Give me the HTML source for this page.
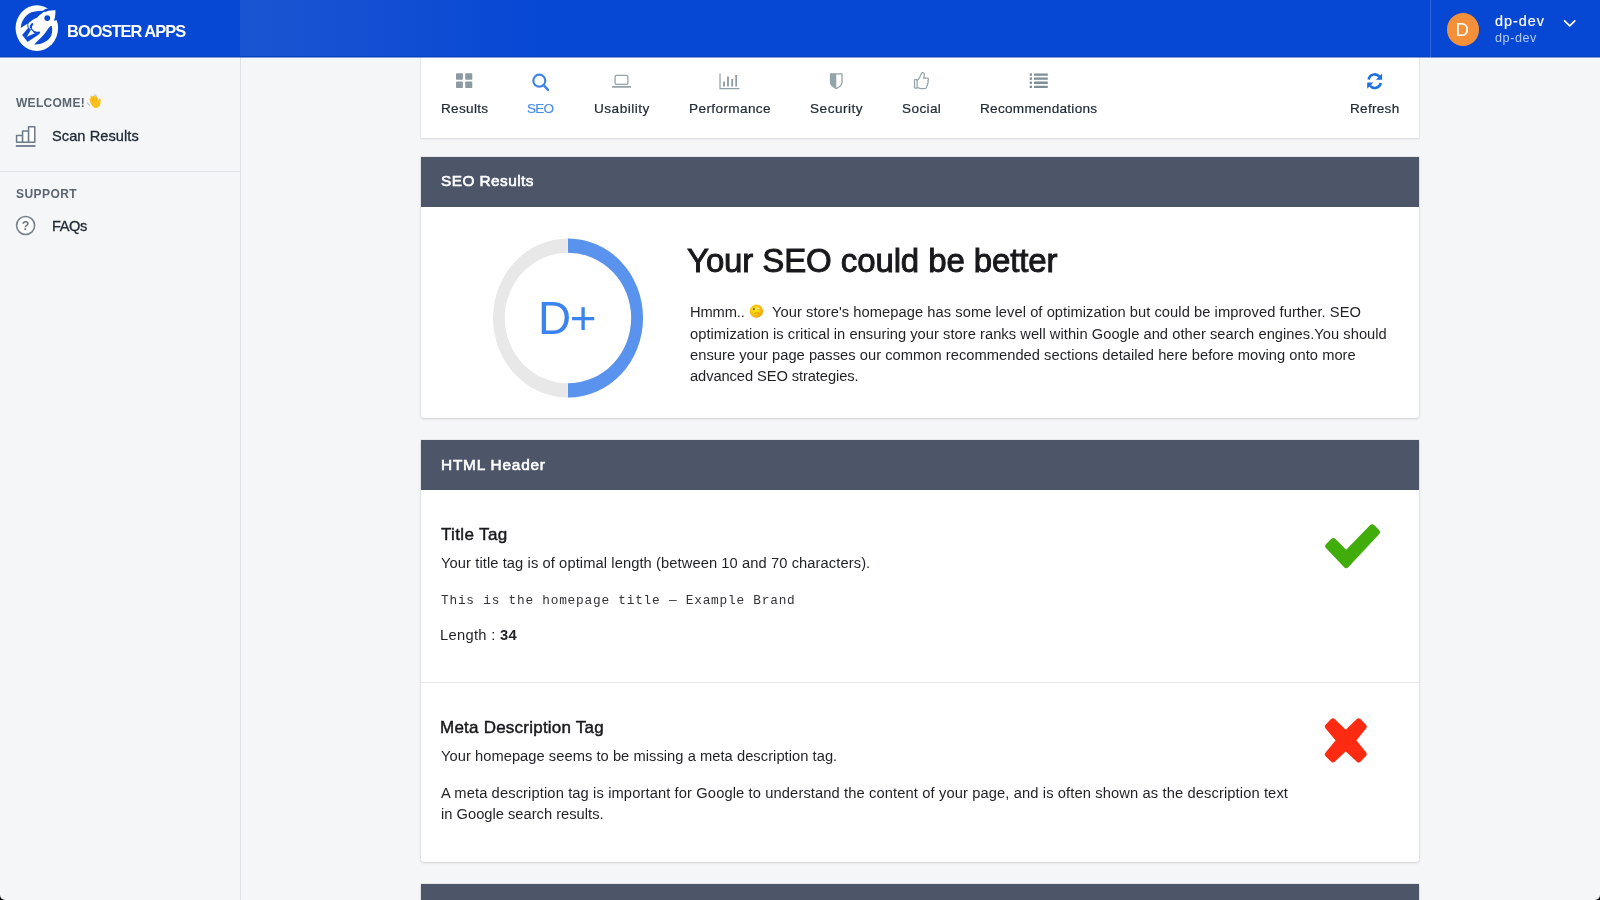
<!DOCTYPE html>
<html lang="en">
<head>
<meta charset="utf-8">
<title>Booster Apps - SEO Results</title>
<style>
*{box-sizing:border-box;margin:0;padding:0}
html,body{width:1600px;height:900px;overflow:hidden}
body{position:relative;background:#f4f6f8;font-family:"Liberation Sans",Arial,sans-serif;color:#212b36;-webkit-font-smoothing:antialiased}
.abs{position:absolute;white-space:nowrap;z-index:4}
div.abs{will-change:transform}
#topbar{position:absolute;left:0;top:0;width:1600px;height:57px;background:#0647d4;z-index:3}
#topbar .grad{position:absolute;left:240px;top:0;width:300px;height:57px;background:linear-gradient(90deg,#1a55d1 0%,#0f4dd2 60%,#0647d4 100%)}
#topbar .shade{position:absolute;left:0;top:56px;width:1600px;height:1px;background:#0540c0}
#topbar .shade2{position:absolute;left:0;top:57px;width:1600px;height:1px;background:rgba(6,66,200,.5)}
#topbar .vsep{position:absolute;left:1430px;top:0;width:1px;height:57px;background:#2f66dc}
#avatar{position:absolute;left:1446.5px;top:12.8px;width:32.6px;height:33.2px;border-radius:50%;background:#f4903a}
#sidebar{position:absolute;left:0;top:57px;width:241px;height:843px;background:#f4f6f8;border-right:1px solid #dfe3e8}
#sdiv{position:absolute;left:0;top:171px;width:240px;height:1px;background:#dfe3e8}
#tabs{position:absolute;left:421px;top:57px;width:998px;height:81px;background:#fff;box-shadow:0 0 0 1px rgba(63,63,68,.04),0 1px 2px rgba(63,63,68,.10)}
.card{position:absolute;left:421px;width:998px;background:#fff;border-radius:0 0 3px 3px;box-shadow:0 0 0 1px rgba(63,63,68,.05),0 1px 3px rgba(63,63,68,.15)}
.chead{position:absolute;left:0;top:0;width:998px;height:50px;background:#4d5568}
.hr{position:absolute;left:0;width:998px;height:1px;background:#e4e7ec}
.corner{position:absolute;bottom:0;width:5px;height:5px;background:#000}
.corner i{position:absolute;width:10px;height:10px;border-radius:50%;background:#f4f6f8;bottom:0}
</style>
</head>
<body>
<div id="topbar">
  <div class="grad"></div>
  <div class="shade"></div>
  <div class="shade2"></div>
  <div class="vsep"></div>
  <svg class="abs" style="left:12px;top:2px" width="50" height="50" viewBox="0 0 900 900">
    <ellipse cx="447" cy="470" rx="383" ry="410" fill="#fff"/>
    <path d="M158 468 C160 370 225 240 350 186 C430 158 520 160 610 158 C560 185 500 232 450 282 C390 302 330 348 290 388 C240 412 200 442 158 468 Z" fill="#0a49d2"/>
    <path d="M400 765 C470 690 560 610 610 540 C640 490 680 445 715 420 C735 520 720 600 680 650 C610 730 500 775 400 765 Z" fill="#0a49d2"/>
    <path d="M560 150 C640 95 740 100 830 120 L830 330 L700 300 Z" fill="#0a49d2"/>
    <path d="M560 200 C640 150 720 145 785 150 C790 250 765 340 710 430 L560 400 Z" fill="#fff"/>
    <path d="M786 150 C792 240 776 300 756 338 L900 310 L900 100 L800 110 Z" fill="#0647d4"/>
    <circle cx="635" cy="290" r="52" fill="#0a49d2"/>
    <path d="M296 462 L186 594 L282 714 L490 576 L476 548 L396 572 L262 630 L340 500 Z" fill="#0a49d2" stroke="#0a49d2" stroke-width="6" stroke-linejoin="round"/>
    <path d="M288 380 C280 420 282 450 300 480" fill="none" stroke="#0a49d2" stroke-width="18" stroke-linecap="round"/>
    <path d="M364 398 C350 415 340 432 338 452" fill="none" stroke="#0a49d2" stroke-width="40" stroke-linecap="round"/>
    <path d="M338 452 C342 490 372 520 408 544" fill="none" stroke="#0a49d2" stroke-width="20" stroke-linecap="round"/>
    <path d="M408 544 C432 556 456 556 488 548" fill="none" stroke="#0a49d2" stroke-width="36" stroke-linecap="round"/>
  </svg>

  <div id="avatar"></div>
  <div class="abs" style="left:1445.6px;top:12.6px;width:32.6px;height:33.2px;line-height:33.2px;text-align:center;font-size:18.6px;color:#fff">D</div>
</div>
<div id="sidebar"></div>
<div id="sdiv"></div>
<div id="tabs"></div>
<div class="card" style="top:157px;height:261px"><div class="chead"></div></div>
<div class="card" style="top:440px;height:422px"><div class="chead"></div><div class="hr" style="top:242px"></div></div>
<div class="card" style="top:884px;height:60px"><div class="chead"></div></div>
<div class="corner" style="left:0"><i style="left:0"></i></div>
<div class="corner" style="right:0"><i style="right:0"></i></div>
<div class="abs" id="brand" style="left:66.50px;top:20.52px;font-size:16.4px;line-height:21px;letter-spacing:-0.958px;font-weight:bold;color:#fff">BOOSTER APPS</div>
<div class="abs" id="uname" style="left:1494.50px;top:11.61px;font-size:14.4px;line-height:19px;letter-spacing:0.977px;color:#fff;-webkit-text-stroke:.2px #fff">dp-dev</div>
<div class="abs" id="usub" style="left:1494.50px;top:30.33px;font-size:12.6px;line-height:16px;letter-spacing:0.577px;color:#b5caf6">dp-dev</div>
<div class="abs" id="welcome" style="left:15.70px;top:95.14px;font-size:12px;line-height:16px;letter-spacing:0.292px;font-weight:bold;color:#5c6670">WELCOME!</div>
<div class="abs" id="scan" style="left:51.80px;top:127.34px;font-size:14.6px;line-height:19px;letter-spacing:0.074px;color:#212b36;-webkit-text-stroke:.3px #212b36">Scan Results</div>
<div class="abs" id="support" style="left:15.70px;top:185.64px;font-size:12px;line-height:16px;letter-spacing:0.431px;font-weight:bold;color:#5c6670">SUPPORT</div>
<div class="abs" id="faqs" style="left:51.80px;top:217.14px;font-size:14.6px;line-height:19px;letter-spacing:-0.367px;color:#212b36;-webkit-text-stroke:.3px #212b36">FAQs</div>
<div class="abs" id="t1" style="left:440.50px;top:99.89px;font-size:13.6px;line-height:18px;letter-spacing:0.295px;color:#212b36;-webkit-text-stroke:.2px #212b36">Results</div>
<div class="abs" id="t2" style="left:526.80px;top:99.89px;font-size:13.6px;line-height:18px;letter-spacing:-0.859px;color:#4a8de6;-webkit-text-stroke:.15px #4a8de6">SEO</div>
<div class="abs" id="t3" style="left:593.50px;top:99.89px;font-size:13.6px;line-height:18px;letter-spacing:0.491px;color:#212b36;-webkit-text-stroke:.2px #212b36">Usability</div>
<div class="abs" id="t4" style="left:688.50px;top:99.89px;font-size:13.6px;line-height:18px;letter-spacing:0.377px;color:#212b36;-webkit-text-stroke:.2px #212b36">Performance</div>
<div class="abs" id="t5" style="left:809.70px;top:99.89px;font-size:13.6px;line-height:18px;letter-spacing:0.499px;color:#212b36;-webkit-text-stroke:.2px #212b36">Security</div>
<div class="abs" id="t6" style="left:901.70px;top:99.89px;font-size:13.6px;line-height:18px;letter-spacing:0.374px;color:#212b36;-webkit-text-stroke:.2px #212b36">Social</div>
<div class="abs" id="t7" style="left:980.00px;top:99.89px;font-size:13.6px;line-height:18px;letter-spacing:0.268px;color:#212b36;-webkit-text-stroke:.2px #212b36">Recommendations</div>
<div class="abs" id="t8" style="left:1349.80px;top:99.89px;font-size:13.6px;line-height:18px;letter-spacing:0.265px;color:#212b36;-webkit-text-stroke:.2px #212b36">Refresh</div>
<div class="abs" id="h1" style="left:441.20px;top:171.46px;font-size:15.4px;line-height:20px;letter-spacing:0.439px;color:#fff;-webkit-text-stroke:.62px #fff">SEO Results</div>
<div class="abs" id="grade" style="left:538.20px;top:288.53px;font-size:45.8px;line-height:60px;letter-spacing:-1.428px;color:#3b83ee">D+</div>
<div class="abs" id="big" style="left:686.60px;top:238.87px;font-size:33px;line-height:43px;letter-spacing:-0.106px;color:#17191c;-webkit-text-stroke:.95px #17191c">Your SEO could be better</div>
<div class="abs" id="p1a" style="left:690.00px;top:302.81px;font-size:14.7px;line-height:19px;letter-spacing:-0.117px;color:#1e2126">Hmmm..</div>
<div class="abs" id="p1b" style="left:771.70px;top:302.81px;font-size:14.7px;line-height:19px;letter-spacing:0.053px;color:#1e2126">Your store's homepage has some level of optimization but could be improved further. SEO</div>
<div class="abs" id="p2" style="left:690.00px;top:324.51px;font-size:14.7px;line-height:19px;letter-spacing:0.039px;color:#1e2126">optimization is critical in ensuring your store ranks well within Google and other search engines.You should</div>
<div class="abs" id="p3" style="left:690.00px;top:345.51px;font-size:14.7px;line-height:19px;letter-spacing:0.030px;color:#1e2126">ensure your page passes our common recommended sections detailed here before moving onto more</div>
<div class="abs" id="p4" style="left:690.00px;top:366.71px;font-size:14.7px;line-height:19px;letter-spacing:-0.089px;color:#1e2126">advanced SEO strategies.</div>
<div class="abs" id="h2" style="left:440.80px;top:454.86px;font-size:15.4px;line-height:20px;letter-spacing:0.791px;color:#fff;-webkit-text-stroke:.62px #fff">HTML Header</div>
<div class="abs" id="tt" style="left:441.10px;top:524.11px;font-size:17px;line-height:22px;letter-spacing:0.361px;color:#17191c;-webkit-text-stroke:.45px #17191c">Title Tag</div>
<div class="abs" id="tt1" style="left:441.10px;top:554.11px;font-size:14.7px;line-height:19px;letter-spacing:0.091px;color:#1e2126">Your title tag is of optimal length (between 10 and 70 characters).</div>
<div class="abs" id="tt2" style="left:441.10px;top:591.69px;font-size:12.8px;line-height:17px;letter-spacing:0.762px;font-family:'Liberation Mono','Courier New',monospace;color:#30343a">This is the homepage title — Example Brand</div>
<div class="abs" id="tt3" style="left:440.30px;top:626.11px;font-size:14.7px;line-height:19px;letter-spacing:0.318px;color:#1e2126">Length : <b>34</b></div>
<div class="abs" id="md" style="left:440.30px;top:717.01px;font-size:17px;line-height:22px;letter-spacing:0.228px;color:#17191c;-webkit-text-stroke:.45px #17191c">Meta Description Tag</div>
<div class="abs" id="md1" style="left:441.10px;top:746.61px;font-size:14.7px;line-height:19px;letter-spacing:0.043px;color:#1e2126">Your homepage seems to be missing a meta description tag.</div>
<div class="abs" id="md2" style="left:441.10px;top:783.71px;font-size:14.7px;line-height:19px;letter-spacing:0.117px;color:#1e2126">A meta description tag is important for Google to understand the content of your page, and is often shown as the description text</div>
<div class="abs" id="md3" style="left:440.60px;top:804.71px;font-size:14.7px;line-height:19px;letter-spacing:0.005px;color:#1e2126">in Google search results.</div>
<!-- icons overlay (page coordinates) -->
<svg class="abs" style="left:0;top:0;z-index:5" width="1600" height="900" viewBox="0 0 1600 900">
  <!-- chevron -->
  <path d="M1564.6 20.8 L1569.7 25.9 L1574.8 20.8" fill="none" stroke="#fff" stroke-width="1.7" stroke-linecap="round" stroke-linejoin="round"/>
  <!-- sidebar: analytics -->
  <g fill="#fff" stroke="#6d7a87" stroke-width="1.5" stroke-linejoin="round">
    <rect x="16.6" y="135.4" width="6" height="6.8"/>
    <rect x="22.6" y="131" width="6" height="11.2"/>
    <rect x="28.6" y="126.7" width="6.2" height="15.5"/>
  </g>
  <rect x="15.8" y="144.9" width="19.8" height="2" rx=".6" fill="#7b8794"/>
  <!-- sidebar: faq -->
  <circle cx="25.6" cy="225.5" r="9" fill="#fff" stroke="#76828f" stroke-width="1.6"/>
  <text x="25.6" y="230.4" text-anchor="middle" font-family="Liberation Sans, sans-serif" font-weight="bold" font-size="12.5" fill="#6b7682">?</text>
  <!-- wave emoji -->
  <g>
    <title>👋 waving hand</title>
    <path d="M89.6 100.2 C88.9 98.6 90.3 97.6 91.2 98.6 L90.6 97.4 C90 95.9 91.8 95.2 92.6 96.4 L92.9 96.9 C92.6 95.4 94.4 95 95 96.2 L95.6 97.4 C95.6 96.2 97.2 96 97.6 97.2 L98.8 100.8 C98.8 99.4 99.2 98.3 100.2 98.4 C100.8 98.5 100.7 99.4 100.6 100.2 C100.6 102.4 100.6 104.4 99.6 105.8 C98.4 107.8 96 108.6 94 107.6 C92 106.6 90.6 103 89.6 100.2 Z" fill="#fcc21b"/>
    <path d="M91.4 98.8 L93.4 103 M92.9 97 L95.2 102.2 M95.5 97.6 L97 101.4" stroke="#e8a50c" stroke-width=".6" fill="none"/>
    <path d="M94.6 94.6 C95.4 94.8 96.2 95.6 96.4 96.4 M87.4 103 C87.8 104 88.6 104.8 89.6 105.2" stroke="#9aa9c9" stroke-width=".9" stroke-linecap="round" fill="none"/>
  </g>
  <!-- tab: results (grid) -->
  <g fill="#8c9ba2">
    <rect x="456" y="73.2" width="6.9" height="6.5" rx=".8"/>
    <rect x="465.2" y="73.2" width="7.1" height="6.5" rx=".8"/>
    <rect x="456" y="81.6" width="6.9" height="6.4" rx=".8"/>
    <rect x="465.2" y="81.6" width="7.1" height="6.4" rx=".8"/>
  </g>
  <!-- tab: seo (search) -->
  <circle cx="539.3" cy="80.7" r="6" fill="none" stroke="#3f84e8" stroke-width="2.2"/>
  <path d="M543.6 85.2 L548 89.8" stroke="#3f84e8" stroke-width="2.4" stroke-linecap="round" fill="none"/>
  <!-- tab: usability (laptop) -->
  <rect x="615.1" y="75.4" width="12.8" height="9" rx="1.4" fill="none" stroke="#95a3aa" stroke-width="1.3"/>
  <rect x="612" y="86" width="19" height="1.7" rx=".5" fill="#95a3aa"/>
  <!-- tab: performance (bar chart) -->
  <path d="M720 73.5 V88.7 H739.5" fill="none" stroke="#93a1a8" stroke-width="1.25"/>
  <g fill="#8c9ba2">
    <rect x="723.1" y="81.5" width="1.8" height="5"/>
    <rect x="727.1" y="76.5" width="1.8" height="10"/>
    <rect x="731.3" y="79" width="1.8" height="7.5"/>
    <rect x="735.3" y="75" width="1.8" height="11.5"/>
  </g>
  <!-- tab: security (shield) -->
  <path d="M830.5 73.8 H842 V82 C842 85 839.5 87 836.25 88.6 C833 87 830.5 85 830.5 82 Z" fill="#fff" stroke="#95a3aa" stroke-width="1.3" stroke-linejoin="round"/>
  <path d="M830.5 73.8 H836.25 V88.6 C833 87 830.5 85 830.5 82 Z" fill="#95a3aa"/>
  <!-- tab: social (thumbs up) -->
  <g fill="none" stroke="#95a3aa" stroke-width="1.25" stroke-linejoin="round" stroke-linecap="round">
    <rect x="914.5" y="79.6" width="2.6" height="8.4" rx=".4"/>
    <path d="M917.4 80.2 C919.6 78.4 920.6 76 921.4 73.6 C921.8 72.2 924.2 72.2 924.4 74.2 C924.5 75.6 924 77 923.4 78.2 H927 C928.6 78.2 929 80 927.8 80.8 C928.6 81.6 928.4 83 927.4 83.4 C928 84.4 927.6 85.6 926.6 86 C926.9 87.4 926 88.6 924.6 88.6 H921 C919.6 88.6 918.6 88 917.4 87.6"/>
  </g>
  <!-- tab: recommendations (list) -->
  <g fill="#7f8e96">
    <rect x="1029.7" y="73.4" width="2.3" height="2.3"/><rect x="1034" y="73.4" width="13.8" height="2.3" rx=".5"/>
    <rect x="1029.7" y="77.5" width="2.3" height="2.3"/><rect x="1034" y="77.5" width="13.8" height="2.3" rx=".5"/>
    <rect x="1029.7" y="81.6" width="2.3" height="2.3"/><rect x="1034" y="81.6" width="13.8" height="2.3" rx=".5"/>
    <rect x="1029.7" y="85.7" width="2.3" height="2.3"/><rect x="1034" y="85.7" width="13.8" height="2.3" rx=".5"/>
  </g>
  <!-- tab: refresh -->
  <g fill="none" stroke="#1b6fe0" stroke-width="2.5">
    <path d="M1368.6 79.4 A6.2 6.2 0 0 1 1379.4 76.6"/>
    <path d="M1380.8 82.9 A6.2 6.2 0 0 1 1370 85.7"/>
  </g>
  <path d="M1382.1 73.6 V79.8 H1375.9 Z" fill="#1b6fe0"/>
  <path d="M1367.2 88.8 V82.6 H1373.4 Z" fill="#1b6fe0"/>
  <!-- grade ring -->
  <path fill-rule="evenodd" d="M493 318 A75 79.6 0 1 0 643 318 A75 79.6 0 1 0 493 318 Z M504.8 318 A63.2 65.3 0 1 1 631.2 318 A63.2 65.3 0 1 1 504.8 318 Z" fill="#e8e8e8"/>
  <path d="M568 238.4 A75 79.6 0 0 1 568 397.6 L568 383.3 A63.2 65.3 0 0 0 568 252.7 Z" fill="#5a93ed"/>
  <rect x="566.6" y="238.4" width="1.4" height="14.3" fill="#ecebe6"/>
  <rect x="566.6" y="383.3" width="1.4" height="14.3" fill="#ecebe6"/>
  <!-- thinking emoji -->
  <g>
    <title>🤔 thinking face</title>
    <defs><radialGradient id="fg" cx="40%" cy="40%" r="65%"><stop offset="0" stop-color="#fff200"/><stop offset=".55" stop-color="#fcc40c"/><stop offset="1" stop-color="#f09a0a"/></radialGradient></defs>
    <circle cx="756.4" cy="311.2" r="6.6" fill="url(#fg)"/>
    <ellipse cx="753.9" cy="309" rx=".9" ry="1.3" fill="#7a5200"/>
    <ellipse cx="757.8" cy="308.8" rx="1.3" ry="1.5" fill="#fff8c8"/>
    <ellipse cx="758" cy="309.2" rx=".6" ry=".8" fill="#8a7440"/>
    <path d="M754.2 313.6 C755.6 312.8 757.6 312.8 759.2 313.2" stroke="#c07a06" stroke-width=".7" fill="none"/>
  </g>
  <!-- check -->
  <path d="M1328.4 546.2 L1333.3 541.3 L1346.2 554.1 L1372.2 527.5 L1376.8 532.2 L1346.2 564.9 Z" fill="#40ad0b" stroke="#40ad0b" stroke-width="6.2" stroke-linejoin="round"/>
  <!-- cross -->
  <path d="M1332.9 720.9 L1345.8 733.4 L1358.6 720.9 L1364.2 726.6 L1353.1 740.4 L1364.2 754.2 L1358.6 759.8 L1345.8 747.9 L1333.0 759.8 L1327.4 754.3 L1338.9 740.4 L1327.4 726.5 Z" fill="#fd2b12" stroke="#fd2b12" stroke-width="5.2" stroke-linejoin="round"/>
</svg>

</body>
</html>
